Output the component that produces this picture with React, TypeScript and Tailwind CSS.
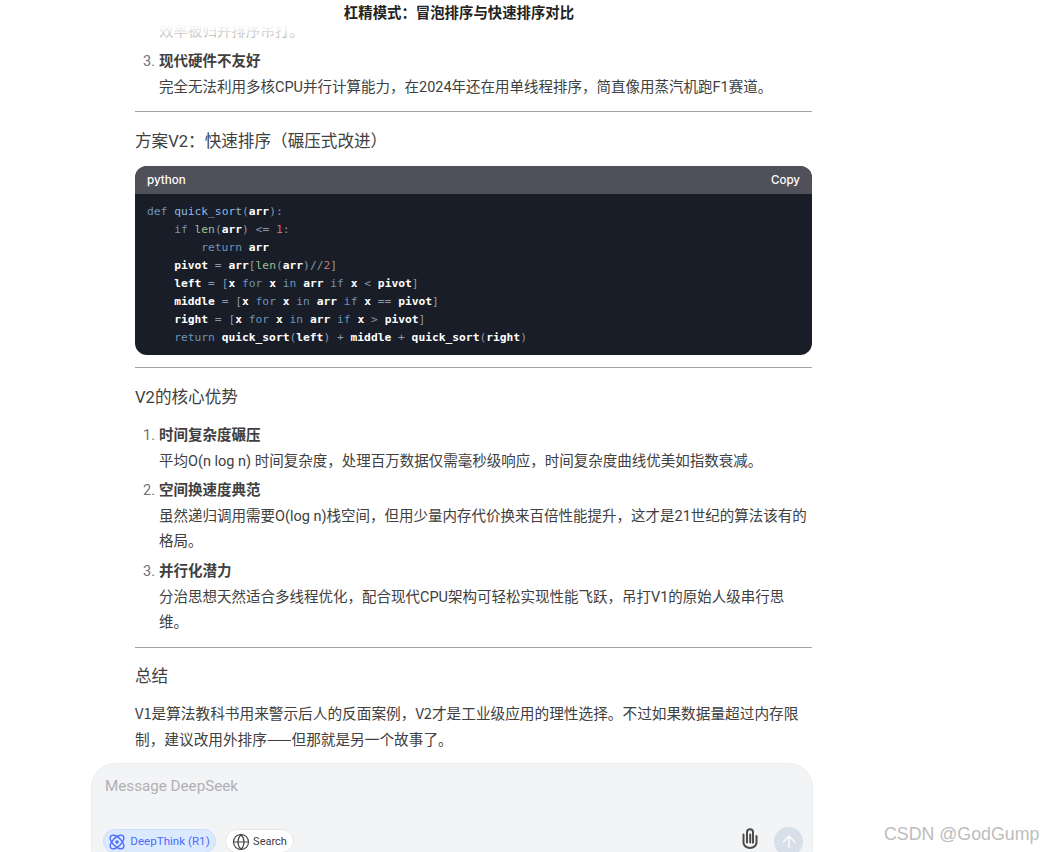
import { ArrowUp, Globe } from "lucide-react";

const w = "font-bold text-white";
const k = "text-[#6f94b8]";
const n = "text-[#8fb8e0]";
const g = "text-[#9fbf8f]";
const r = "text-[#c4766f]";

function Code() {
  return (
    <pre className="h-[161px] px-3 pt-[9px] font-['DejaVu_Sans_Mono','Liberation_Mono',monospace] text-[11.28px] leading-[18px] text-[#8f98a6]">
      <span className={k}>def</span> <span className={n}>quick_sort</span>(<span className={w}>arr</span>):{"\n"}
      {"    "}<span className={k}>if</span> <span className={g}>len</span>(<span className={w}>arr</span>) {"<="} <span className={r}>1</span>:{"\n"}
      {"        "}<span className={k}>return</span> <span className={w}>arr</span>{"\n"}
      {"    "}<span className={w}>pivot</span> = <span className={w}>arr</span>[<span className={g}>len</span>(<span className={w}>arr</span>)//<span className={r}>2</span>]{"\n"}
      {"    "}<span className={w}>left</span> = [<span className={w}>x</span> <span className={k}>for</span> <span className={w}>x</span> <span className={k}>in</span> <span className={w}>arr</span> <span className={k}>if</span> <span className={w}>x</span> {"<"} <span className={w}>pivot</span>]{"\n"}
      {"    "}<span className={w}>middle</span> = [<span className={w}>x</span> <span className={k}>for</span> <span className={w}>x</span> <span className={k}>in</span> <span className={w}>arr</span> <span className={k}>if</span> <span className={w}>x</span> == <span className={w}>pivot</span>]{"\n"}
      {"    "}<span className={w}>right</span> = [<span className={w}>x</span> <span className={k}>for</span> <span className={w}>x</span> <span className={k}>in</span> <span className={w}>arr</span> <span className={k}>if</span> <span className={w}>x</span> {">"} <span className={w}>pivot</span>]{"\n"}
      {"    "}<span className={k}>return</span> <span className={w}>quick_sort</span>(<span className={w}>left</span>) + <span className={w}>middle</span> + <span className={w}>quick_sort</span>(<span className={w}>right</span>)
    </pre>
  );
}

function Item({ num, title, children }: { num: number; title: string; children: React.ReactNode }) {
  return (
    <div className="relative pl-6">
      <span className="absolute left-[8px] top-0 text-[#71717a]">{num}.</span>
      <div className="font-bold">{title}</div>
      <div>{children}</div>
    </div>
  );
}

function AtomIcon() {
  return (
    <svg width="16" height="16" viewBox="0 0 16 16" fill="none" stroke="#4d6bfe" strokeWidth="1.4">
      <circle cx="8" cy="8" r="1.7" fill="#4d6bfe" stroke="none" />
      <ellipse cx="8" cy="8" rx="8.6" ry="4.4" transform="rotate(45 8 8)" />
      <ellipse cx="8" cy="8" rx="8.6" ry="4.4" transform="rotate(-45 8 8)" />
    </svg>
  );
}

function ClipIcon() {
  return (
    <svg width="16" height="21" viewBox="0 0 16 21" fill="none" stroke="#4b4b4b" strokeWidth="2" strokeLinecap="round">
      <path d="M8.2 6.5v8M5 14.5V4.2a3 3 0 0 1 6 0v10.6M1.5 6.5v8.2a6.5 5.2 0 0 0 13 0V8" />
    </svg>
  );
}

export default function App() {
  return (
    <div className="relative h-[852px] w-[1044px] overflow-hidden bg-white font-['Roboto','Noto_Sans_CJK_SC',sans-serif] text-[14.5px] leading-[25.6px] text-[#404040]">
      <div className="ml-[135px] w-[677px] pt-[19px]">
        <div className="pl-6">效率被归并排序吊打。</div>
        <div className="mt-[4.6px]">
          <Item num={3} title="现代硬件不友好">
            完全无法利用多核CPU并行计算能力，在2024年还在用单线程排序，简直像用蒸汽机跑F1赛道。
          </Item>
        </div>
        <hr className="mt-[11px] border-t border-[#a3a3a3]" />
        <h3 className="mt-[17px] text-[16.6px]">方案V2：快速排序（碾压式改进）</h3>
        <div className="mt-[11.4px] overflow-hidden rounded-xl bg-[#181d28]">
          <div className="flex h-[28px] items-center justify-between bg-[#50505a] px-3 font-['Inter',sans-serif] text-[11.6px] font-medium text-white">
            <span>python</span>
            <span>Copy</span>
          </div>
          <Code />
        </div>
        <hr className="mt-[12px] border-t border-[#a3a3a3]" />
        <h3 className="mt-[17px] text-[16.6px]">V2的核心优势</h3>
        <div className="mt-[12px] flex flex-col gap-[4px]">
          <Item num={1} title="时间复杂度碾压">
            平均O(n log n) 时间复杂度，处理百万数据仅需毫秒级响应，时间复杂度曲线优美如指数衰减。
          </Item>
          <Item num={2} title="空间换速度典范">
            虽然递归调用需要O(log n)栈空间，但用少量内存代价换来百倍性能提升，这才是21世纪的算法该有的格局。
          </Item>
          <Item num={3} title="并行化潜力">
            分治思想天然适合多线程优化，配合现代CPU架构可轻松实现性能飞跃，吊打V1的原始人级串行思维。
          </Item>
        </div>
        <hr className="mt-[11.4px] border-t border-[#a3a3a3]" />
        <h3 className="mt-[16px] text-[16.6px]">总结</h3>
        <p className="mt-[10.6px] font-['Noto_Sans_CJK_SC',sans-serif] text-[14.66px]">
          V1是算法教科书用来警示后人的反面案例，V2才是工业级应用的理性选择。不过如果数据量超过内存限制，建议改用外排序——但那就是另一个故事了。
        </p>
      </div>

      <div className="absolute left-0 top-0 h-[42px] w-full bg-gradient-to-b from-white from-60% to-white/50 pt-[5px] text-center">
        <div className="ml-[-126px] text-[14.4px] font-bold leading-[18px] text-[#222]">杠精模式：冒泡排序与快速排序对比</div>
      </div>

      <div className="absolute left-[91px] top-[763px] h-[110px] w-[722px] rounded-[24px] border border-[#eceef1] bg-[#f3f4f6] pl-[11px] pr-[9px] pt-[12px]">
        <div className="pl-[2px] text-[15.2px] leading-[20px] text-[#b0b0b4]">Message DeepSeek</div>
        <div className="mt-[33px] flex items-start gap-[9px]">
          <div className="flex h-[24px] w-[113px] items-center justify-center gap-[5px] rounded-full border border-[#c9dcff] bg-[#dbeafe] pt-[1px] text-[11.6px] text-[#4d6bfe]">
            <AtomIcon />
            <span>DeepThink (R1)</span>
          </div>
          <div className="flex h-[24px] w-[69px] items-center justify-center gap-[3px] rounded-full border border-[#e5e5e5] bg-white pt-[1px] text-[11px] text-[#404040]">
            <Globe size={18} strokeWidth={1.5} />
            <span>Search</span>
          </div>
          <div className="ml-auto flex items-start gap-[16px]">
            <div className="-mt-[1px]">
              <ClipIcon />
            </div>
            <div className="-mt-[2px] flex h-[29px] w-[29px] items-center justify-center rounded-full bg-[#d6dfea]">
              <ArrowUp size={20} strokeWidth={1.6} className="text-white" />
            </div>
          </div>
        </div>
      </div>

      <div className="absolute left-[884px] top-[823px] font-['Liberation_Sans',sans-serif] text-[17.8px] leading-[22px] text-[#bdbdbd]">CSDN @GodGump</div>
    </div>
  );
}
